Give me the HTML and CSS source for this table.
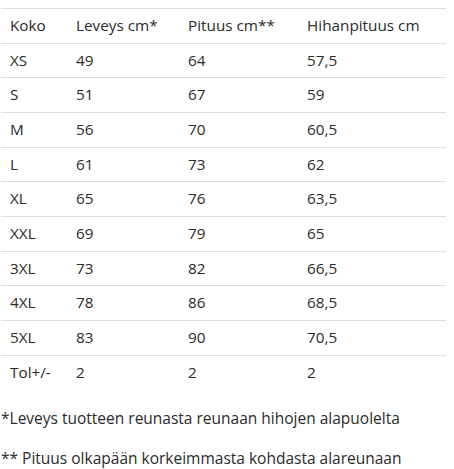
FILE: index.html
```
<!DOCTYPE html>
<html lang="fi">
<head>
<meta charset="utf-8">
<link rel="stylesheet" href="styles.css">
</head>
<body>
<table class="size-table">
  <colgroup>
    <col class="c1"><col class="c2"><col class="c3"><col class="c4">
  </colgroup>
  <tbody>
    <tr><td>Koko</td><td>Leveys cm*</td><td>Pituus cm**</td><td>Hihanpituus cm</td></tr>
    <tr><td>XS</td><td>49</td><td>64</td><td>57,5</td></tr>
    <tr><td>S</td><td>51</td><td>67</td><td>59</td></tr>
    <tr><td>M</td><td>56</td><td>70</td><td>60,5</td></tr>
    <tr><td>L</td><td>61</td><td>73</td><td>62</td></tr>
    <tr><td>XL</td><td>65</td><td>76</td><td>63,5</td></tr>
    <tr><td>XXL</td><td>69</td><td>79</td><td>65</td></tr>
    <tr><td>3XL</td><td>73</td><td>82</td><td>66,5</td></tr>
    <tr><td>4XL</td><td>78</td><td>86</td><td>68,5</td></tr>
    <tr><td>5XL</td><td>83</td><td>90</td><td>70,5</td></tr>
    <tr><td>Tol+/-</td><td>2</td><td>2</td><td>2</td></tr>
  </tbody>
</table>
<p class="note note-first">*Leveys tuotteen reunasta reunaan hihojen alapuolelta</p>
<p class="note">** Pituus olkapään korkeimmasta kohdasta alareunaan</p>
</body>
</html>
```
FILE: styles.css
```
html, body {
  margin: 0;
  background: #fff;
}
body {
  padding: 8px 8px 0 1px;
  font-family: "Open Sans", "Liberation Sans", sans-serif;
  color: #2b2b2b;
}
.size-table {
  width: 445px;
  border-collapse: collapse;
  table-layout: fixed;
  font-size: 15.3px;
}
.c1 { width: 66px; }
.c2 { width: 112px; }
.c3 { width: 119px; }
.c4 { width: 148px; }
.size-table td {
  border-top: 1px solid #ddd;
  padding: 6px 9px;
  line-height: 21.67px;
  text-align: left;
  vertical-align: middle;
}
.note {
  margin: 16px 0 0;
  font-size: 15.5px;
  line-height: 24px;
}
.note-first {
  margin-top: 17px;
}
```
